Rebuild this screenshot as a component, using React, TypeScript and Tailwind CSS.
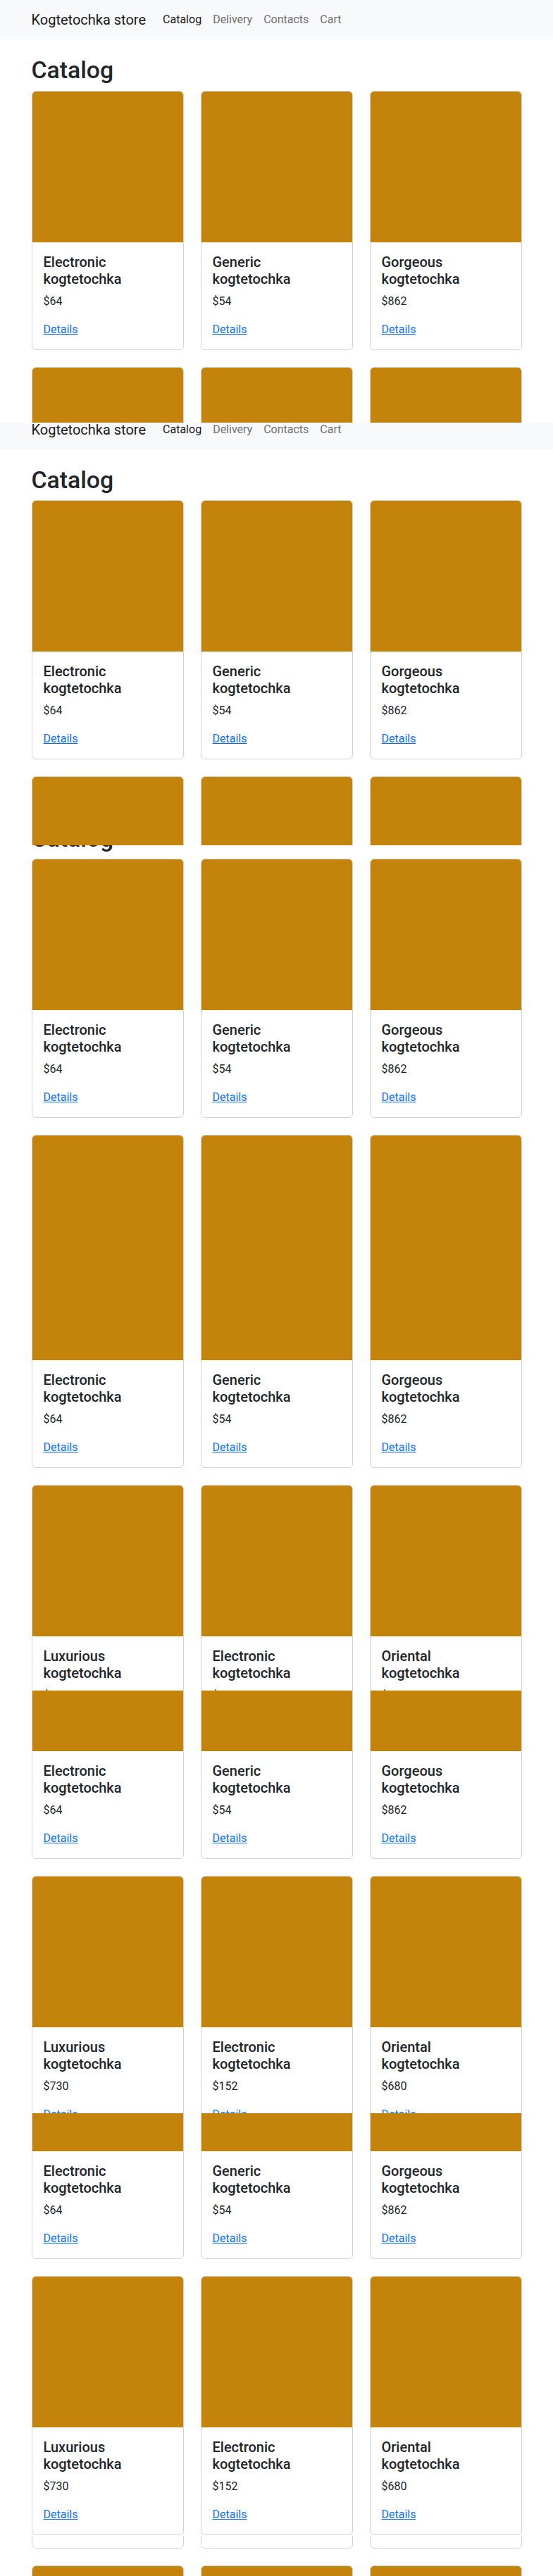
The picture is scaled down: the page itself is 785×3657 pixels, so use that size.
const items = [
  { name: 'Electronic kogtetochka', price: 64 },
  { name: 'Generic kogtetochka', price: 54 },
  { name: 'Gorgeous kogtetochka', price: 862 },
  { name: 'Luxurious kogtetochka', price: 730 },
  { name: 'Electronic kogtetochka', price: 152 },
  { name: 'Oriental kogtetochka', price: 680 },
  { name: 'Generic kogtetochka', price: 318 },
  { name: 'Gorgeous kogtetochka', price: 427 },
  { name: 'Luxurious kogtetochka', price: 95 },
]

function Card({ name, price }: { name: string; price: number }) {
  return (
    <div className="flex flex-col overflow-hidden rounded-[6px] border border-[#d3d3d3] bg-white">
      <div className="h-[214px] bg-[#c4840c]" />
      <div className="p-4">
        <h5 className="mb-2 text-[20px] leading-[24px] font-medium">{name}</h5>
        <p className="mb-4 text-[16px] leading-6">${price}</p>
        <a href="#" className="text-[16px] leading-6 text-[#0d6efd] underline">
          Details
        </a>
      </div>
    </div>
  )
}

function Page() {
  return (
    <div className="w-[785px] bg-white text-[#212529]">
      <nav className="bg-[#f8f9fa] py-2">
        <div className="mx-auto flex w-[720px] items-center px-3">
          <a href="#" className="mr-4 py-[5px] text-[20px] leading-[30px] text-[#1a1a1a]">
            Kogtetochka store
          </a>
          <ul className="flex">
            <li><a href="#" className="block px-2 py-2 leading-6 text-[#1a1a1a]">Catalog</a></li>
            <li><a href="#" className="block px-2 py-2 leading-6 text-[#6f7072]">Delivery</a></li>
            <li><a href="#" className="block px-2 py-2 leading-6 text-[#6f7072]">Contacts</a></li>
            <li><a href="#" className="block px-2 py-2 leading-6 text-[#6f7072]">Cart</a></li>
          </ul>
        </div>
      </nav>

      <main className="mx-auto w-[720px] px-3 pt-6 pb-6">
        <h1 className="mb-2 text-[33.78px] leading-[40.5px] font-medium">Catalog</h1>
        <div className="grid grid-cols-3 gap-6">
          {items.map((item, i) => (
            <Card key={i} name={item.name} price={item.price} />
          ))}
        </div>
      </main>
    </div>
  )
}

// the screenshot is a stack of 600px scroll captures, each starting a bit further down the page
function Strip({ height, shift }: { height: string; shift: string }) {
  return (
    <div className={`w-[785px] overflow-hidden ${height}`}>
      <div className={shift}>
        <Page />
      </div>
    </div>
  )
}

export default function App() {
  return (
    <div className="w-[785px] bg-white font-[Roboto,sans-serif]">
      <Strip height="h-[600px]" shift="mt-0" />
      <Strip height="h-[600px]" shift="-mt-[18.3px]" />
      <Strip height="h-[600px]" shift="-mt-[109.2px]" />
      <Strip height="h-[600px]" shift="-mt-[212.2px]" />
      <Strip height="h-[600px]" shift="-mt-[257.2px]" />
      <Strip height="h-[600px]" shift="-mt-[289.6px]" />
      <Strip height="h-[57px]" shift="-mt-[870.2px]" />
    </div>
  )
}
